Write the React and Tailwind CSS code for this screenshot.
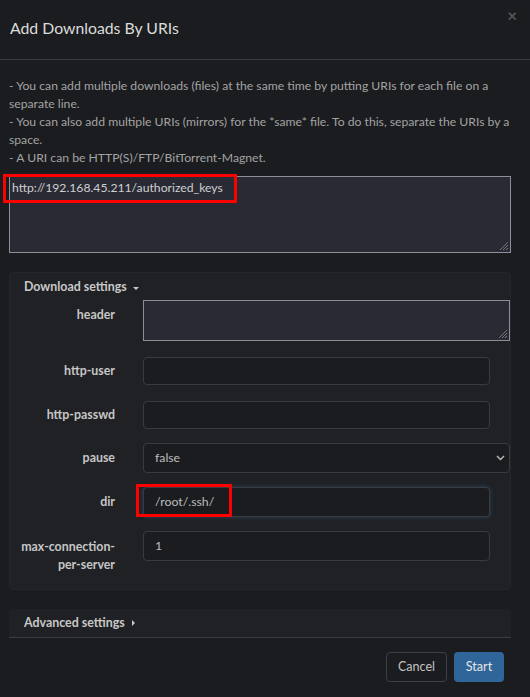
import React from "react";

const inputBase =
  "rounded-[4px] border border-[#3a3b40] bg-[#1b1c1f] px-[11px] text-[12.3px] text-[#bdbdbd] outline-none";

function Row({ label, children, labelClass = "pt-[6px]", gap = "mb-[14px]" }) {
  return (
    <div className={`flex ${gap}`}>
      <div className={`w-[105px] shrink-0 text-right text-[12.4px] font-bold leading-[18px] text-[#c6c6c6] ${labelClass}`}>
        {label}
      </div>
      <div className="ml-[28px] flex-1">{children}</div>
    </div>
  );
}

export default function App() {
  return (
    <div
      className="h-[697px] w-[530px] overflow-hidden bg-[#1b1c1f] text-[#a9a9a9]"
      style={{ fontFamily: "Lato, 'Open Sans', sans-serif" }}
    >
      {/* header */}
      <div className="relative flex h-[60px] items-center border-b border-[#3b3c40] px-[10px] pb-[4px]">
        <h4 className="text-[15.8px] text-[#dcdcdc]">Add Downloads By URIs</h4>
        <span className="absolute right-[13px] top-[7px] text-[17px] font-bold leading-none text-[#555659]">×</span>
      </div>

      {/* body */}
      <div className="pl-[9px] pr-[19px] pt-[17px]">
        <div className="text-[12.2px] leading-[18px] text-[#a3a3a3]">
          <p>- You can add multiple downloads (files) at the same time by putting URIs for each file on a separate line.</p>
          <p>- You can also add multiple URIs (mirrors) for the *same* file. To do this, separate the URIs by a space.</p>
          <p>- A URI can be HTTP(S)/FTP/BitTorrent-Magnet.</p>
        </div>

        <div className="relative mt-[9px] h-[77px] border border-[#8d8e99] bg-[#2a2a35] px-[2px] pt-[2px] text-[12.2px] leading-[18px] text-[#cfcfcf]">
          http://192.168.45.211/authorized_keys
          <span className="absolute -left-[7px] -top-[3px] h-[29px] w-[234px] border-[3px] border-[#ff0000]" />
          <Grip />
        </div>

        {/* download settings */}
        <div className="mt-[19px] rounded-[4px] border border-[#25262a] bg-[#202124] pb-[15px]">
          <div className="flex items-center pb-[4px] pl-[14px] pt-[5px] text-[12.4px] font-bold leading-[18px] text-[#c8c8c8]">
            Download settings
            <span className="ml-[6px] mt-[2px] border-x-[3px] border-t-[3px] border-x-transparent border-t-[#c8c8c8]" />
          </div>

          <Row label="header" gap="mb-[16px]">
            <div className="relative h-[41px] border border-[#8d8e99] bg-[#2a2a35]">
              <Grip />
            </div>
          </Row>
          <Row label="http-user" gap="mb-[16px]" labelClass="pt-[5px]">
            <div className={`${inputBase} h-[28px] w-[347px]`} />
          </Row>
          <Row label="http-passwd" labelClass="pt-[5px]">
            <div className={`${inputBase} h-[28px] w-[347px]`} />
          </Row>
          <Row label="pause">
            <div className={`${inputBase} flex h-[30px] items-center justify-between pr-[4px]`}>
              <span>false</span>
              <svg width="9" height="6" viewBox="0 0 9 6" fill="none" stroke="#bdbdbd" strokeWidth="1.4">
                <path d="M1 1l3.5 3.5L8 1" />
              </svg>
            </div>
          </Row>
          <Row label="dir">
            <div className="relative">
              <div className={`${inputBase} flex h-[30px] w-[347px] items-center border-[#2e6da4] shadow-[0_0_4px_rgba(46,109,164,0.5)]`}>
                /root/.ssh/
              </div>
              <span className="absolute -left-[7px] -top-[3px] h-[33px] w-[96px] border-[3px] border-[#ff0000]" />
            </div>
          </Row>
          <Row label={<>max-connection-<br />per-server</>} labelClass="pt-[7px]" gap="">
            <div className={`${inputBase} flex h-[30px] w-[347px] items-center`}>1</div>
          </Row>
        </div>

        {/* advanced settings */}
        <div className="mt-[19px] flex h-[29px] items-center rounded-t-[4px] border-b border-[#3b3c40] bg-[#202124] pl-[15px] text-[12.4px] font-bold text-[#c8c8c8]">
          Advanced settings
          <span className="ml-[7px] border-y-[3px] border-l-[3px] border-y-transparent border-l-[#c8c8c8]" />
        </div>
      </div>

      {/* footer */}
      <div className="flex justify-end gap-[7px] pr-[26px] pt-[14px]">
        <button className="h-[30px] w-[61px] rounded-[4px] border border-[#3e3f44] bg-[#1b1c1f] text-[12.6px] text-[#c2c2c2]">
          Cancel
        </button>
        <button className="h-[30px] w-[50px] rounded-[4px] bg-[#2f6598] text-[12.6px] text-[#e6e6e6]">Start</button>
      </div>
    </div>
  );
}

function Grip() {
  return (
    <svg className="absolute bottom-[1px] right-[1px]" width="10" height="10" viewBox="0 0 10 10" stroke="#777" strokeWidth="1">
      <path d="M9 1L1 9M9 4L4 9M9 7L7 9" />
    </svg>
  );
}
